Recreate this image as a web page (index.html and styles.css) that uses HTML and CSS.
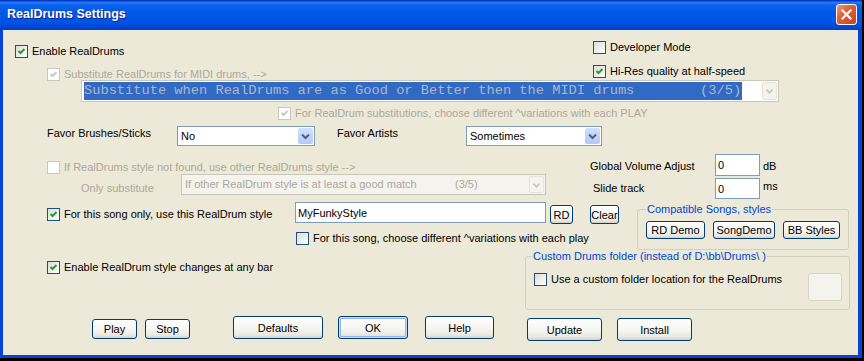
FILE: index.html
```html
<!DOCTYPE html>
<html lang="en">
<head>
    <meta charset="UTF-8">
    <title>RealDrums Settings</title>
    <link rel="stylesheet" href="styles.css">
</head>
<body>
    <div class="window">
        <div class="titlebar">
            <span class="title">RealDrums Settings</span>
            <span class="close">
                <svg width="19" height="19" viewBox="0 0 19 19"><path d="M5.5 5.5 L13.5 13.5 M13.5 5.5 L5.5 13.5" stroke="#fff" stroke-width="2.2" stroke-linecap="square"/></svg>
            </span>
        </div>

        <div class="client">
            <div class="top">
                <div class="top-left">
                    <label class="chk enable"><span class="box"><svg viewBox="0 0 11 11"><polyline points="2.5,5 4.5,7 8.5,3" class="tick"/></svg></span>Enable RealDrums</label>
                    <label class="chk dis sub"><span class="box"><svg viewBox="0 0 11 11"><polyline points="2.5,5 4.5,7 8.5,3" class="tick"/></svg></span>Substitute RealDrums for MIDI drums, --&gt;</label>
                </div>
                <div class="top-right">
                    <label class="chk"><span class="box"></span>Developer Mode</label>
                    <label class="chk"><span class="box"><svg viewBox="0 0 11 11"><polyline points="2.5,5 4.5,7 8.5,3" class="tick"/></svg></span>Hi-Res quality at half-speed</label>
                </div>
            </div>

            <div class="combo sub-combo">
                <span class="picked">Substitute when RealDrums are as Good or Better then the MIDI drums        (3/5)</span>
                <span class="combo-btn off"><svg width="15" height="16" viewBox="0 0 15 16"><polyline points="4,6.5 7.5,10 11,6.5" class="chev"/></svg></span>
            </div>

            <label class="chk dis variations"><span class="box"><svg viewBox="0 0 11 11"><polyline points="2.5,5 4.5,7 8.5,3" class="tick"/></svg></span>For RealDrum substitutions, choose different ^variations with each PLAY</label>

            <div class="row favor">
                <span class="favor-label lbl-brush">Favor Brushes/Sticks</span>
                <div class="combo combo-brush">
                    <span class="combo-text">No</span>
                    <span class="combo-btn"><svg width="15" height="16" viewBox="0 0 15 16"><polyline points="4,6.5 7.5,10 11,6.5" class="chev"/></svg></span>
                </div>
                <span class="favor-label lbl-artist">Favor Artists</span>
                <div class="combo combo-artist">
                    <span class="combo-text">Sometimes</span>
                    <span class="combo-btn"><svg width="15" height="16" viewBox="0 0 15 16"><polyline points="4,6.5 7.5,10 11,6.5" class="chev"/></svg></span>
                </div>
            </div>

            <div class="row row-f1">
                <div class="f-left">
                    <label class="chk dis notfound"><span class="box"></span>If RealDrums style not found, use other RealDrums style --&gt;</label>
                </div>
                <span class="vol-label">Global Volume Adjust</span>
                <input class="field num" value="0">
                <span class="unit">dB</span>
            </div>

            <div class="row row-f2">
                <span class="only-label">Only substitute</span>
                <div class="combo combo-only">
                    <span class="combo-text only-text">If other RealDrum style is at least a good match</span>
                    <span class="combo-text only-rate">(3/5)</span>
                    <span class="combo-btn off"><svg width="15" height="16" viewBox="0 0 15 16"><polyline points="4,6.5 7.5,10 11,6.5" class="chev"/></svg></span>
                </div>
                <span class="slide-label">Slide track</span>
                <input class="field num slide" value="0">
                <span class="unit">ms</span>
            </div>

            <div class="row row-f34">
                <div class="f34-left">
                    <div class="row row-f3">
                        <label class="chk song-only"><span class="box"><svg viewBox="0 0 11 11"><polyline points="2.5,5 4.5,7 8.5,3" class="tick"/></svg></span>For this song only, use this RealDrum style</label>
                        <input class="field style-input" value="MyFunkyStyle">
                        <button class="btn btn-rd">RD</button>
                        <button class="btn btn-clear">Clear</button>
                    </div>
                    <label class="chk song-var"><span class="box"></span>For this song, choose different ^variations with each play</label>
                </div>
                <fieldset class="group compat">
                    <legend>Compatible Songs, styles</legend>
                    <div class="compat-buttons">
                        <button class="btn small rd-demo">RD Demo</button>
                        <button class="btn small song-demo">SongDemo</button>
                        <button class="btn small bb-styles">BB Styles</button>
                    </div>
                </fieldset>
            </div>

            <div class="row row-g">
                <div class="g-left">
                    <label class="chk any-bar"><span class="box"><svg viewBox="0 0 11 11"><polyline points="2.5,5 4.5,7 8.5,3" class="tick"/></svg></span>Enable RealDrum style changes at any bar</label>
                </div>
                <fieldset class="group custom">
                    <legend>Custom Drums folder (instead of D:\bb\Drums\ )</legend>
                    <div class="custom-row">
                        <label class="chk"><span class="box"></span>Use a custom folder location for the RealDrums</label>
                        <span class="folder-box"></span>
                    </div>
                </fieldset>
            </div>

            <div class="row buttons">
                <button class="btn b-play">Play</button>
                <button class="btn b-stop">Stop</button>
                <button class="btn b-defaults">Defaults</button>
                <button class="btn b-ok">OK</button>
                <button class="btn b-help">Help</button>
                <button class="btn b-update">Update</button>
                <button class="btn b-install">Install</button>
            </div>
        </div>
    </div>
</body>
</html>
```

FILE: styles.css
```css
body {
    margin: 0;
    background-color: #000;
    font-family: "Liberation Sans", Arial, sans-serif;
    font-size: 11px;
    color: #000;
}
.window {
    width: 862px;
    height: 358px;
    display: flex;
    flex-direction: column;
    background-color: #0843d6;
}
.titlebar {
    height: 30px;
    flex: none;
    display: flex;
    align-items: center;
    padding: 0 5px 0 7px;
    background: linear-gradient(to bottom, #0036c5 0px, #0036c5 1px, #2b7cf5 2px, #0a62ec 5px, #0058e8 12px, #0055e3 22px, #0047d5 27px, #003dc8 30px);
}
.title {
    flex: 1;
    color: #fff;
    font-weight: bold;
    font-size: 12.5px;
    text-shadow: 1px 1px #0f1f8c;
    margin-top: -2px;
}
.close {
    width: 21px;
    height: 21px;
    box-sizing: border-box;
    border: 1px solid #fff;
    border-radius: 3px;
    background: linear-gradient(135deg, #ec9a7c 0%, #e0603a 40%, #c9431f 100%);
    display: flex;
    align-items: center;
    justify-content: center;
    margin-top: -2px;
}
.client {
    flex: 1;
    margin: 0 4px 3px 3px;
    background-color: #ece9d8;
}
.row {
    display: flex;
    align-items: flex-start;
}

/* checkboxes */
.chk {
    display: flex;
    align-items: center;
    gap: 4px;
    height: 13px;
    line-height: 13px;
    white-space: nowrap;
    flex: none;
}
.box {
    width: 13px;
    height: 13px;
    box-sizing: border-box;
    border: 1px solid #1c5180;
    background: linear-gradient(135deg, #dcdcd7, #fff);
    flex: none;
}
.box svg {
    display: block;
    width: 11px;
    height: 11px;
}
.tick {
    fill: none;
    stroke: #21a121;
    stroke-width: 2;
}
.chk.dis {
    color: #aca899;
}
.chk.dis .box {
    border-color: #cac8bb;
    background: #fff;
}
.chk.dis .tick {
    stroke: #cac8bb;
}

/* combos */
.combo {
    display: flex;
    box-sizing: border-box;
    border: 1px solid #7f9db9;
    background-color: #fff;
    height: 20px;
    flex: none;
}
.combo-text {
    flex: 1;
    padding-left: 3px;
    line-height: 18px;
    white-space: nowrap;
}
.combo-btn {
    width: 15px;
    margin: 1px;
    border-radius: 2px;
    background: linear-gradient(#d2e0fd, #b3c9f6);
    display: flex;
    align-items: center;
    justify-content: center;
}
.chev {
    fill: none;
    stroke: #4d6185;
    stroke-width: 2;
}
.combo-btn.off {
    background: #f4f3ee;
    border: 1px solid #e6e4d8;
    box-sizing: border-box;
}
.combo-btn.off .chev {
    stroke: #c9c7ba;
}

/* top area */
.top {
    display: flex;
    height: 50px;
}
.top-left {
    width: 590px;
    padding-top: 15px;
    display: flex;
    flex-direction: column;
    gap: 10px;
    box-sizing: border-box;
}
.enable {
    margin-left: 12px;
}
.sub {
    margin-left: 44px;
}
.top-right {
    padding-top: 11px;
    display: flex;
    flex-direction: column;
    gap: 11px;
}
.sub-combo {
    margin-left: 78px;
    width: 698px;
    height: 22px;
    border-color: #c9c7ba;
}
.picked {
    margin: 1px 0 1px 2px;
    padding-right: 1px;
    background-color: #316ac5;
    color: #aeb6c6;
    font-family: "Liberation Mono", "Courier New", monospace;
    font-size: 13.7px;
    line-height: 18px;
    white-space: pre;
}
.sub-combo .combo-btn {
    margin-left: auto;
}
.variations {
    margin: 5px 0 0 275px;
}

/* favor row */
.favor {
    margin-top: 6px;
    height: 20px;
}
.favor-label {
    line-height: 14px;
    flex: none;
}
.lbl-brush {
    margin-left: 44px;
    width: 130px;
}
.combo-brush {
    width: 138px;
}
.lbl-artist {
    margin-left: 22px;
    width: 129px;
}
.combo-artist {
    width: 136px;
}

/* edit fields */
.field {
    box-sizing: border-box;
    border: 1px solid #7f9db9;
    background-color: #fff;
    font-family: inherit;
    font-size: 11px;
    color: #000;
    padding: 0 2px;
    margin: 0;
    outline: none;
    flex: none;
}
.num {
    width: 45px;
    height: 22px;
}
.unit {
    margin: 6px 0 0 3px;
    line-height: 13px;
}

.row-f1 {
    margin-top: 8px;
    height: 20px;
}
.f-left {
    width: 587px;
    flex: none;
}
.notfound {
    margin: 7px 0 0 44px;
}
.vol-label {
    width: 125px;
    margin-top: 6px;
    line-height: 13px;
    flex: none;
}

.row-f2 {
    height: 24px;
}
.only-label {
    margin: 8px 0 0 78px;
    width: 100px;
    line-height: 13px;
    color: #aca899;
    flex: none;
}
.combo-only {
    width: 365px;
    height: 21px;
    border-color: #c9c7ba;
    background-color: #f4f3ee;
    color: #aca899;
}
.only-text {
    flex: none;
    width: 270px;
}
.only-rate {
    padding-left: 0;
}
.slide-label {
    margin: 8px 0 0 47px;
    width: 122px;
    line-height: 13px;
    flex: none;
}
.num.slide {
    margin-top: 4px;
    height: 21px;
}

/* buttons */
.btn {
    box-sizing: border-box;
    border: 1px solid #003c74;
    border-radius: 3px;
    background: linear-gradient(#ffffff 0%, #f5f5f1 55%, #e9e8e1 85%, #d6d0c5 100%);
    font-family: inherit;
    font-size: 11px;
    color: #000;
    padding: 0;
    flex: none;
}

.row-f34 {
    height: 52px;
}
.f34-left {
    width: 634px;
    flex: none;
}
.row-f3 {
    height: 28px;
}
.song-only {
    margin: 10px 0 0 44px;
    width: 248px;
}
.style-input {
    margin-top: 4px;
    width: 251px;
    height: 21px;
}
.btn-rd {
    margin: 7px 0 0 4px;
    width: 23px;
    height: 19px;
}
.btn-clear {
    margin: 7px 0 0 17px;
    width: 29px;
    height: 19px;
}
.song-var {
    margin: 6px 0 0 293px;
}

.group {
    box-sizing: border-box;
    margin: 0;
    min-width: 0;
    border: 1px solid #d0d0bf;
    border-radius: 3px;
}
.group legend {
    padding: 0 1px;
    color: #0046d5;
    line-height: 13px;
}
.compat {
    margin-top: 5px;
    width: 212px;
    height: 47px;
    padding: 5px 0 0 8px;
}
.compat-buttons {
    display: flex;
    gap: 8px;
}
.small {
    height: 18px;
}
.rd-demo {
    width: 59px;
}
.song-demo {
    width: 62px;
}
.bb-styles {
    width: 57px;
}

.row-g {
    height: 60px;
}
.g-left {
    width: 522px;
    flex: none;
}
.any-bar {
    margin: 11px 0 0 44px;
}
.custom {
    width: 325px;
    height: 60px;
    padding: 10px 7px 0 8px;
}
.custom legend {
    margin-left: -2px;
}
.custom-row {
    display: flex;
    align-items: flex-start;
}
.folder-box {
    margin-left: auto;
    width: 34px;
    height: 28px;
    box-sizing: border-box;
    border: 1px solid #d8d5c8;
    border-radius: 3px;
    background-color: #f4f3ee;
}

/* bottom row */
.buttons {
    margin-top: 6px;
}
.b-play {
    margin: 3px 0 0 89px;
    width: 45px;
    height: 20px;
}
.b-stop {
    margin: 3px 0 0 8px;
    width: 45px;
    height: 20px;
}
.b-defaults {
    margin-left: 43px;
    width: 90px;
    height: 23px;
}
.b-ok {
    margin-left: 15px;
    width: 70px;
    height: 23px;
    box-shadow: inset 0 0 0 1px #c9dcfc, inset 0 0 0 2px #98b4ec;
}
.b-help {
    margin-left: 17px;
    width: 69px;
    height: 23px;
}
.b-update {
    margin: 2px 0 0 33px;
    width: 75px;
    height: 23px;
}
.b-install {
    margin: 2px 0 0 15px;
    width: 75px;
    height: 23px;
}
```
